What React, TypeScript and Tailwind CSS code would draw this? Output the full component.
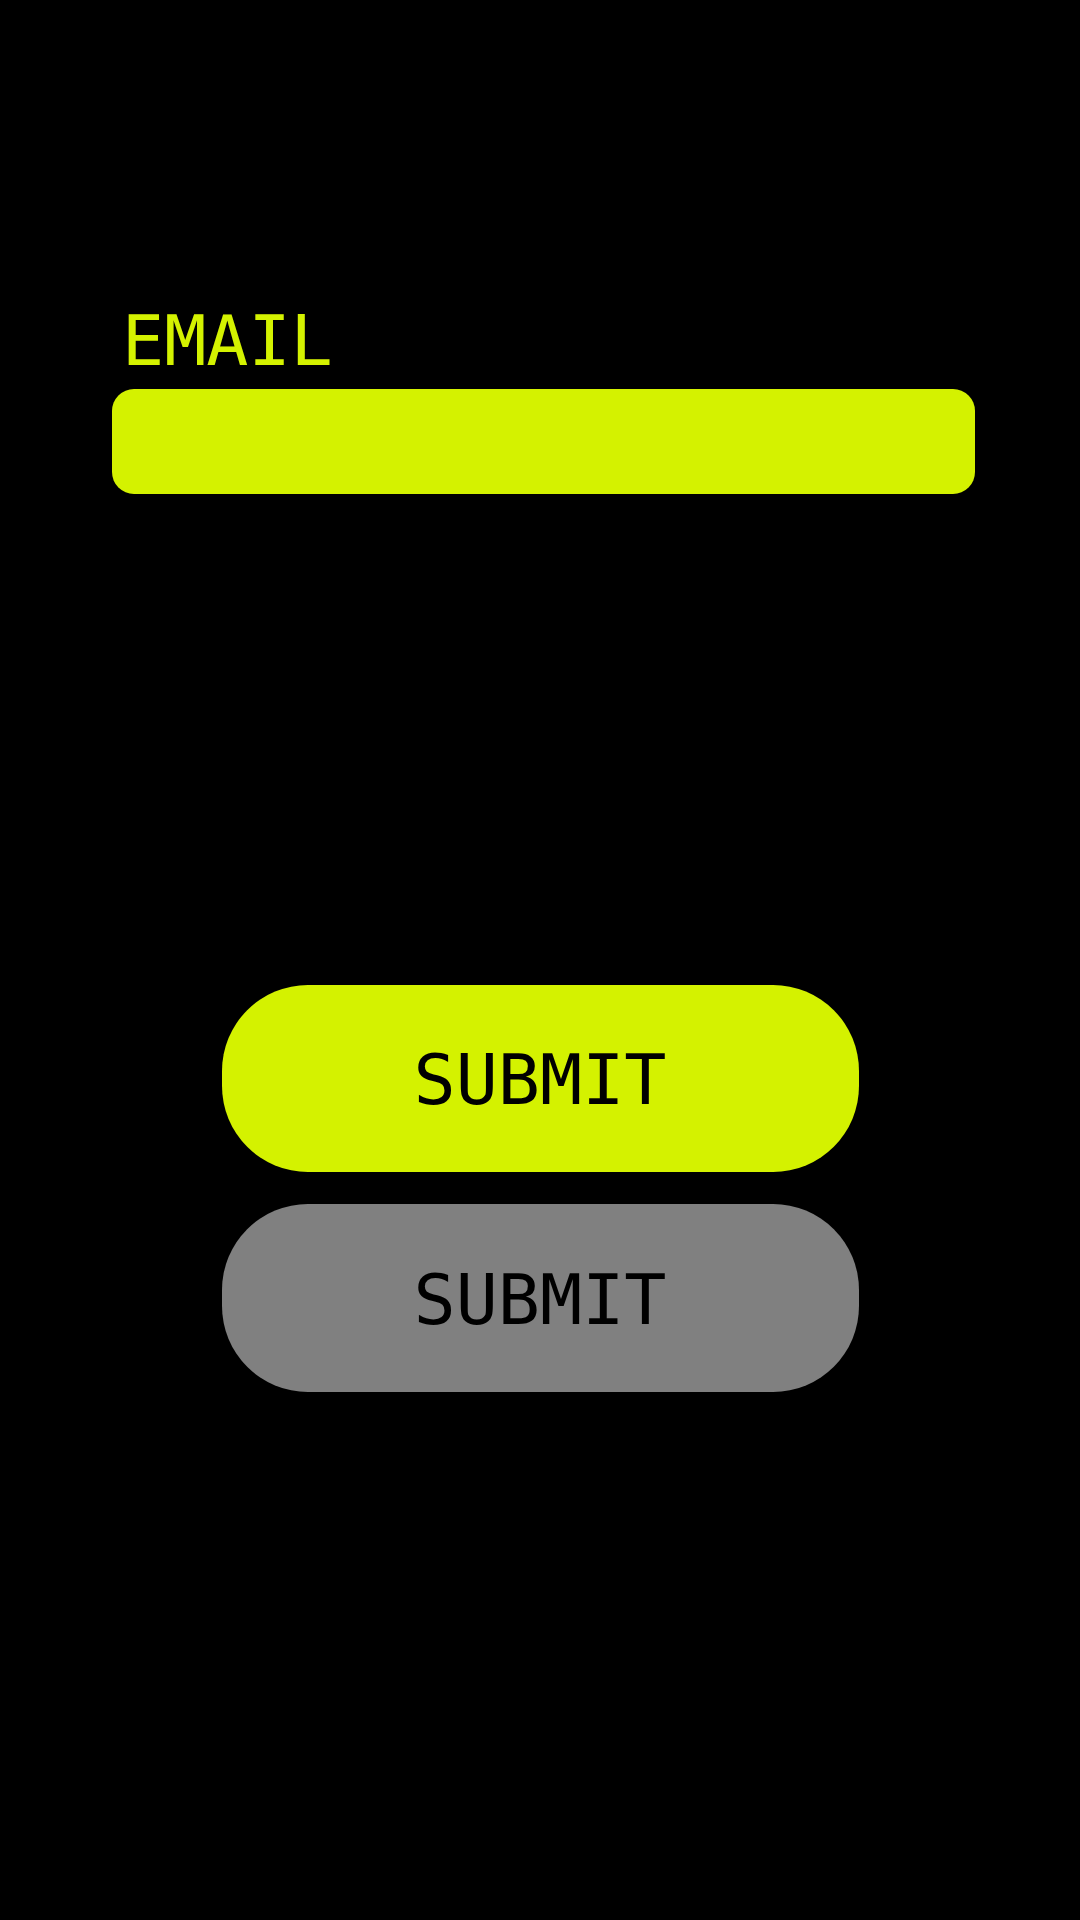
export default function App() {
  return (
    <div
      className="min-h-[1920px] w-[1080px] bg-black"
      style={{ fontFamily: '"DejaVu Sans Mono", "Liberation Mono", monospace' }}
    >
      <div className="flex flex-col pl-[112px] pt-[306px]">
        <label className="pl-[10px] text-[70px] leading-none text-[#d4f200]">EMAIL</label>
        <input
          type="email"
          className="mt-[13px] h-[105px] w-[863px] rounded-[22px] bg-[#d4f200] px-6 text-[40px] text-black outline-none"
        />
      </div>

      <div className="mt-[491px] flex flex-col items-center gap-[32px]">
        <button className="flex h-[187px] w-[637px] items-center justify-center rounded-[86px] bg-[#d4f200] pt-[3px] text-[70px] leading-none text-black">
          SUBMIT
        </button>
        <button
          disabled
          className="flex h-[188px] w-[637px] items-center justify-center rounded-[86px] bg-[#808080] pt-[3px] text-[70px] leading-none text-black"
        >
          SUBMIT
        </button>
      </div>
    </div>
  );
}
